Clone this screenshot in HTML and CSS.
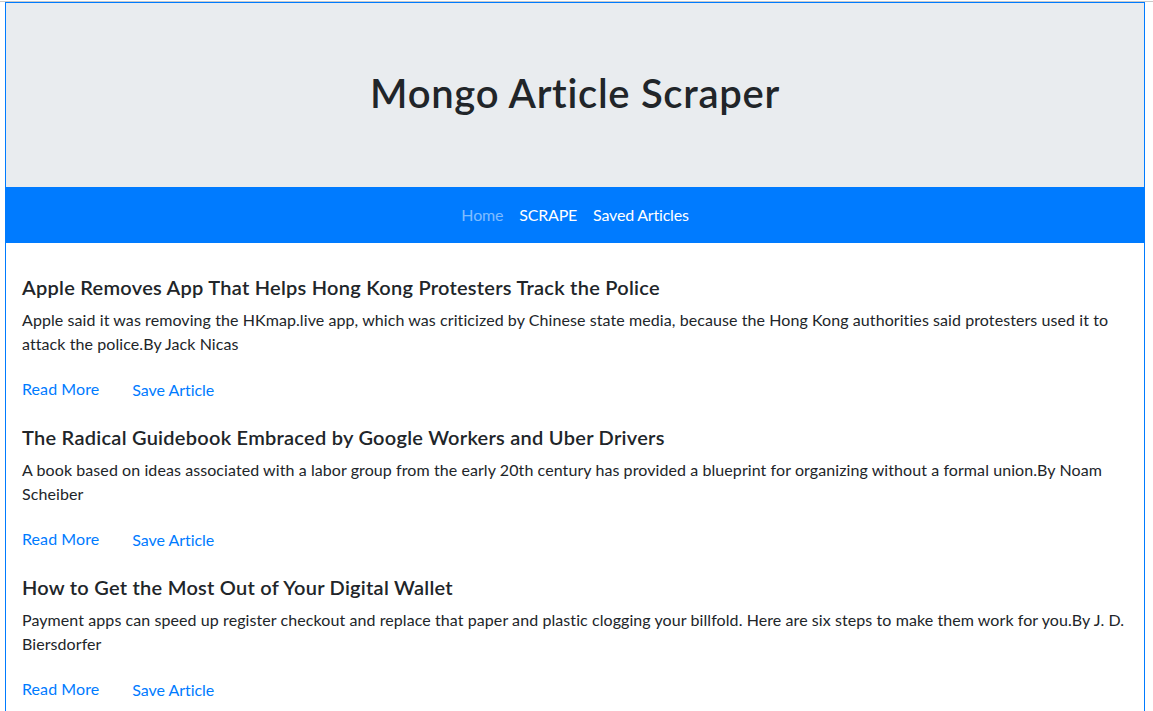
FILE: index.html
```html
<!DOCTYPE html>
<html lang="en">
<head>
<meta charset="utf-8">
<title>Mongo Article Scraper</title>
<link rel="stylesheet" href="styles.css">
</head>
<body>
<div class="topline"></div>
<div class="page">
  <header class="jumbotron">
    <h1 class="title">Mongo Article Scraper</h1>
  </header>
  <nav class="navbar">
    <a class="nav-link muted" href="#">Home</a>
    <a class="nav-link" href="#">SCRAPE</a>
    <a class="nav-link" href="#">Saved Articles</a>
  </nav>
  <main class="articles">
    <article class="article">
      <h5 class="headline">Apple Removes App That Helps Hong Kong Protesters Track the Police</h5>
      <p class="summary">Apple said it was removing the HKmap.live app, which was criticized by Chinese state media, because the Hong Kong authorities said protesters used it to attack the police.By Jack Nicas</p>
      <div class="actions">
        <a class="read" href="#">Read More</a>
        <button class="save" type="button">Save Article</button>
      </div>
    </article>
    <article class="article">
      <h5 class="headline">The Radical Guidebook Embraced by Google Workers and Uber Drivers</h5>
      <p class="summary">A book based on ideas associated with a labor group from the early 20th century has provided a blueprint for organizing without a formal union.By Noam Scheiber</p>
      <div class="actions">
        <a class="read" href="#">Read More</a>
        <button class="save" type="button">Save Article</button>
      </div>
    </article>
    <article class="article">
      <h5 class="headline">How to Get the Most Out of Your Digital Wallet</h5>
      <p class="summary">Payment apps can speed up register checkout and replace that paper and plastic clogging your billfold. Here are six steps to make them work for you.By J. D. Biersdorfer</p>
      <div class="actions">
        <a class="read" href="#">Read More</a>
        <button class="save" type="button">Save Article</button>
      </div>
    </article>
  </main>
</div>
</body>
</html>
```
FILE: styles.css
```css
html, body {
  margin: 0;
  padding: 0;
  background: #fff;
}
body {
  padding-top: 1px;
  font-family: Lato, "Noto Sans", sans-serif;
  font-size: 16px;
  line-height: 24px;
  color: #212529;
  letter-spacing: 0.08px;
}
.topline {
  border-top: 1px solid #c8c8c8;
}
.page {
  margin-left: 5px;
  width: 1138px;
  min-height: 720px;
  border: 1px solid #007bff;
  border-bottom: none;
}
.jumbotron {
  background: #e9ecef;
  padding: 66px 32px 62px;
  text-align: center;
}
.title {
  margin: 0 0 8px;
  font-size: 40px;
  line-height: 48px;
  font-weight: 600;
  letter-spacing: 0.7px;
}
.navbar {
  background: #007bff;
  height: 56px;
  display: flex;
  justify-content: center;
  align-items: center;
}
.nav-link {
  padding: 8px;
  color: #fff;
  text-decoration: none;
  letter-spacing: -0.2px;
}
.nav-link.muted {
  color: rgba(255, 255, 255, 0.5);
}
.articles {
  padding: 32px 16px 0;
}
.article {
  margin-bottom: 16px;
}
.headline {
  margin: 0 0 9px;
  font-size: 20px;
  line-height: 24px;
  font-weight: 600;
  letter-spacing: 0.26px;
}
.summary {
  margin: 0 0 15px;
}
.actions {
  display: flex;
  align-items: center;
  height: 38px;
}
.read {
  color: #007bff;
  text-decoration: none;
  margin-top: -3px;
}
.save {
  margin-left: 21px;
  padding: 6px 12px;
  border: none;
  background: transparent;
  font: inherit;
  letter-spacing: -0.05px;
  color: #007bff;
  line-height: 24px;
  cursor: pointer;
}
```
